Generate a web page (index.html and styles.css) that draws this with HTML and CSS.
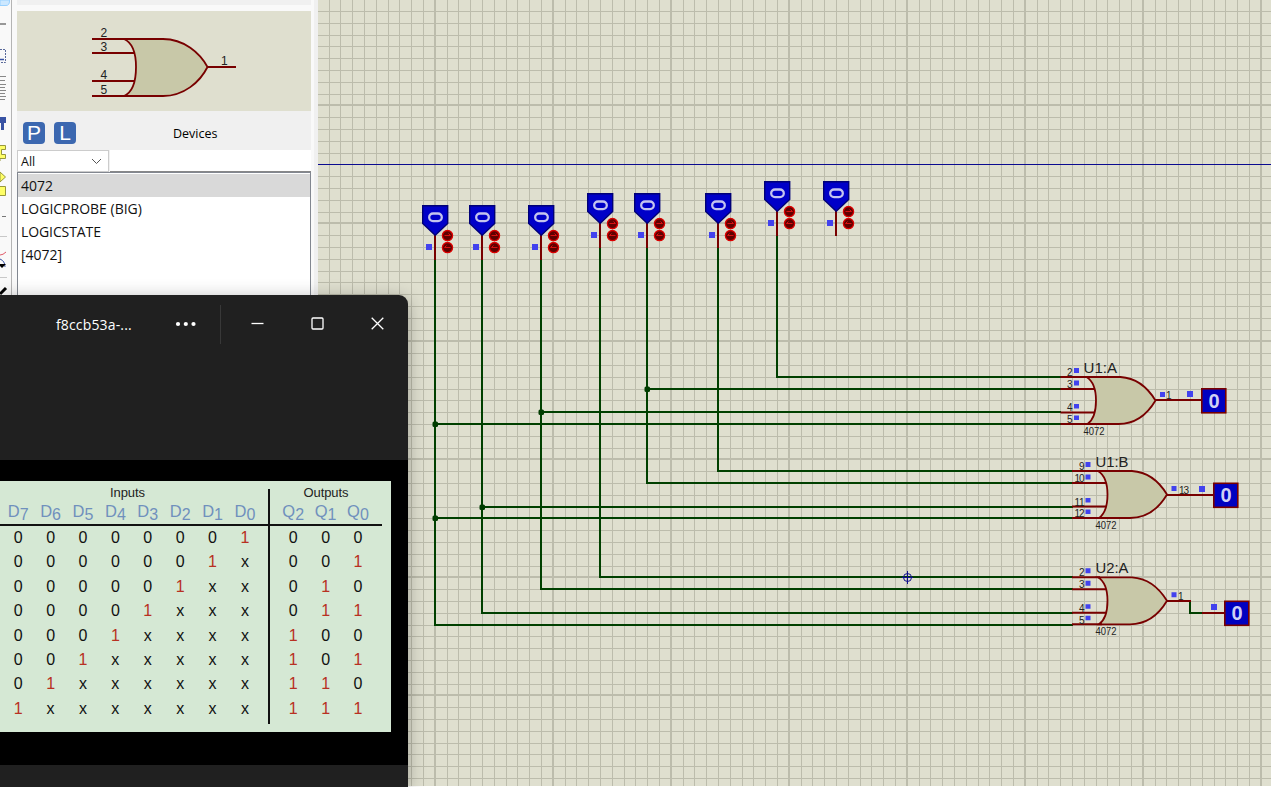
FILE: index.html
```
<!DOCTYPE html>
<html lang="en">
<head>
<meta charset="utf-8">
<title>Schematic Capture</title>
<link rel="stylesheet" href="styles.css">
</head>
<body>
<div class="app">
  <aside class="toolbar">
    <svg width="17" height="300" viewBox="0 0 17 300">
      <path d="M0 0H9.500V1Q9.500 5.500 6 5.500H0Z" fill="#cce8ff" stroke="#99d1ff"/>
      <path d="M0 24H6" stroke="#777" stroke-width="1.500"/>
      <path d="M0 49.500H5.500V62.500H0" fill="none" stroke="#5a6a9a" stroke-dasharray="2 1"/>
      <path d="M0 59.500H4" stroke="#3953a4" stroke-width="1.500"/>
      <path d="M0 76.500H6M0 80.500H5M0 84.500H6M0 87.500H5M0 90.500H6M0 93.500H5M0 96.500H6M0 99.500H5" stroke="#888"/>
      <path d="M0 117H6V123H4V130H1V123H0Z" fill="#3953a4"/>
      <path d="M-1 145.500H5.500V149.500H1.500V154.500H5.500V158.500H0V161" fill="#ffff66" stroke="#98983c"/>
      <path d="M0 172L5.500 177L0 182Z" fill="#ffff66" stroke="#98983c"/>
      <path d="M-1 186.500H5.500V195.500H-1Z" fill="#ffff66" stroke="#98983c"/>
      <path d="M2 216.500H6" stroke="#777"/>
      <path d="M0 236.500H7M0 277.500H7" stroke="#c8c8c8"/>
      <path d="M0 255Q3 255 6 252" fill="none" stroke="#e05a68"/>
      <path d="M0 259Q5 261 5 267" fill="none" stroke="#3953a4"/>
      <path d="M0 264L6 264L2 268L0 266Z" fill="#000"/>
      <path d="M0 294L6 288" stroke="#000" stroke-width="3"/>
      <path d="M11.500 0V300" stroke="#b4b4b4"/>
    </svg>
  </aside>

  <section class="panel">
    <div class="panel-top"></div>
    <div class="preview">
      <svg width="294" height="100" viewBox="17 11 294 100">
        <g class="gate">
          <path class="body" d="M124 39H163C184 39 200 53 207.500 67C200 82 184 96 163 96H124C133 92 136 79 136 67C136 55 133 43 124 39Z"/>
          <path class="pin" d="M92 39H126M92 53H134M92 81H134M92 96H126M207 67H236"/>
        </g>
        <g class="pin-text preview-text">
          <text x="100.500" y="37">2</text><text x="100.500" y="51">3</text>
          <text x="100.500" y="79">4</text><text x="100.500" y="94">5</text>
          <text x="221" y="65">1</text>
        </g>
      </svg>
    </div>
    <div class="devices-head">
      <span class="key">P</span><span class="key">L</span>
      <span class="devices-title">Devices</span>
    </div>
    <div class="filter">
      <div class="select"><span>All</span>
        <svg width="11" height="7" viewBox="0 0 11 7"><path d="M1 1L5.500 5.500L10 1" fill="none" stroke="#555"/></svg>
      </div>
      <div class="search"></div>
    </div>
    <ul class="device-list">
      <li class="selected">4072</li>
      <li>LOGICPROBE (BIG)</li>
      <li class="tight">LOGICSTATE</li>
      <li>[4072]</li>
    </ul>
  </section>

  <main class="canvas">
    <svg width="953" height="786" viewBox="318 0 953 786">
      <defs>
        <pattern id="grid" x="434" y="104" width="118" height="118" patternUnits="userSpaceOnUse">
          <path class="grid-line" d="M13.500 0V118M24.500 0V118M36.500 0V118M48.500 0V118M60.500 0V118M72.500 0V118M83.500 0V118M95.500 0V118M107.500 0V118"/>
          <path class="grid-line" d="M0 13.500H118M0 25.500H118M0 37.500H118M0 49.500H118M0 60.500H118M0 72.500H118M0 84.500H118M0 96.500H118M0 108.500H118"/>
          <path class="grid-major" d="M1 0V118M0 1H118"/>
        </pattern>
        <g id="state">
          <path class="pin" d="M0 29V55"/>
          <path d="M-12.300 .7H12.700V18.500L.2 30.300L-12.300 18.500Z" fill="#0000c8" stroke="#000078" stroke-width="1.400"/>
          <rect x="-5.800" y="8.500" width="12.600" height="7.600" rx="3.800" fill="none" stroke="#c4c4ee" stroke-width="2.300"/>
          <rect class="sq" x="-9" y="39" width="6" height="6"/>
          <g fill="#600000" stroke="#dc0000" stroke-width="1.300">
            <circle cx="12.500" cy="30.600" r="5.100"/><circle cx="12.500" cy="42.600" r="5.100"/>
          </g>
          <path d="M9.500 30.500H15.500M13.500 28.500L15.500 30.500M15.500 42.500H9.500M11.500 40.500L9.500 42.500" fill="none" stroke="#d81010"/>
        </g>
        <g id="or4" class="gate">
          <path class="body" d="M26 0H60C77 1 88 12 95 23.500C87 37 75 47 58 47H27C34 42 35.500 32 35.500 23.500C35.500 14 34 5 26 0Z"/>
          <path class="pin" d="M0 0H28M0 12H34M0 35.500H34M0 47H30"/>
          <path class="sq" d="M13.500 -9h5v5h-5zM13.500 3.500h5v5h-5zM13.500 27h5v4.500h-5zM13.500 38.500h5v4.500h-5zM99.500 15h5v5h-5z"/>
        </g>
        <g id="probe">
          <rect x=".8" y=".8" width="24" height="24" fill="#0000c0" stroke="#780000" stroke-width="1.600"/>
          <text class="probe-text" x="13" y="19.500">0</text>
        </g>
      </defs>
      <rect x="318" width="953" height="786" fill="#dfdfcf"/>
      <rect x="318" width="953" height="786" fill="url(#grid)"/>
      <path d="M318 164.500H1271" stroke="#0a0a90"/>

      <path class="wire" d="M435 259V625H1073M435 424H1061M435 518H1073M482 259V613H1073M482 507H1073M541 259V589H1073M541 412H1061M600 247V577H1073M647 247V483H1073M647 389H1061M718 247V471H1073M777 235V377H1061M1190 601V613H1203"/>
      <g fill="#003c00">
        <rect x="432.500" y="421.500" width="5.500" height="5.500" rx="1.500"/><rect x="432.500" y="515.500" width="5.500" height="5.500" rx="1.500"/>
        <rect x="479.500" y="504.500" width="5.500" height="5.500" rx="1.500"/><rect x="538.500" y="409.500" width="5.500" height="5.500" rx="1.500"/>
        <rect x="644.500" y="386.500" width="5.500" height="5.500" rx="1.500"/>
      </g>

      <use href="#state" x="435" y="205"/><use href="#state" x="482" y="205"/>
      <use href="#state" x="541" y="205"/><use href="#state" x="600" y="193"/>
      <use href="#state" x="647" y="193"/><use href="#state" x="718" y="193"/>
      <use href="#state" x="777" y="181"/><use href="#state" x="836" y="181"/>

      <use href="#or4" x="1060.500" y="377"/>
      <use href="#or4" x="1072" y="471"/>
      <use href="#or4" x="1072" y="577.300"/>
      <path class="pin" d="M1155 400H1202M1166 495H1214M1166 601H1190V602M1202 613H1225"/>
      <path class="sq" d="M1187 391h6v6h-6zM1199 486h6v6h-6zM1211 604h6v6h-6z"/>
      <use href="#probe" x="1201" y="388"/>
      <use href="#probe" x="1213" y="482.500"/>
      <use href="#probe" x="1224" y="600.500"/>

      <g class="ref-text">
        <text x="1083.500" y="373" textLength="33.500" lengthAdjust="spacingAndGlyphs">U1:A</text>
        <text x="1095.500" y="467" textLength="33" lengthAdjust="spacingAndGlyphs">U1:B</text>
        <text x="1095.500" y="573" textLength="33" lengthAdjust="spacingAndGlyphs">U2:A</text>
      </g>
      <g class="pin-text">
        <text x="1067" y="375.800">2</text><text x="1067" y="387.800">3</text><text x="1067" y="410.800">4</text><text x="1067" y="422.800">5</text><text x="1166" y="398.500">1</text>
        <text x="1079" y="469.500">9</text><text x="1074.500" y="481.500" textLength="10">10</text><text x="1074.500" y="505.500" textLength="10">11</text><text x="1074.500" y="516.800" textLength="10">12</text><text x="1179" y="493.500" textLength="10">13</text>
        <text x="1079" y="575.500">2</text><text x="1079" y="587.500">3</text><text x="1079" y="611.500">4</text><text x="1079" y="623.500">5</text><text x="1178" y="599.500">1</text>
        <text x="1083.500" y="435" textLength="21" lengthAdjust="spacingAndGlyphs">4072</text><text x="1095.500" y="529" textLength="21" lengthAdjust="spacingAndGlyphs">4072</text><text x="1095.500" y="635" textLength="21" lengthAdjust="spacingAndGlyphs">4072</text>
      </g>
      <g fill="none" stroke="#10108c"><circle cx="907.500" cy="577.500" r="4"/><path d="M902 577.500H913M907.500 571V584"/></g>
    </svg>
  </main>
</div>

<section class="viewer">
  <header class="titlebar">
    <span class="filename">f8ccb53a-...</span>
    <svg class="more" width="22" height="6" viewBox="0 0 22 6" fill="#fff"><circle cx="3" cy="3" r="2.100"/><circle cx="10.800" cy="3" r="2.100"/><circle cx="18.500" cy="3" r="2.100"/></svg>
    <span class="divider"></span>
    <div class="window-buttons">
      <svg width="13" height="13" viewBox="0 0 13 13"><path d="M0.500 6.500H12.500"/></svg>
      <svg width="13" height="13" viewBox="0 0 13 13"><rect x="1" y="1" width="11" height="11" rx="1"/></svg>
      <svg width="13" height="13" viewBox="0 0 13 13"><path d="M.7 .7L12.300 12.300M12.300 .7L.7 12.300"/></svg>
    </div>
  </header>
  <div class="image-area">
    <div class="truth">
      <div class="side inputs">
        <div class="caption">Inputs</div>
        <div class="cells names"><span>D<sub>7</sub></span><span>D<sub>6</sub></span><span>D<sub>5</sub></span><span>D<sub>4</sub></span><span>D<sub>3</sub></span><span>D<sub>2</sub></span><span>D<sub>1</sub></span><span>D<sub>0</sub></span></div>
        <div class="cells values">
          <i>0</i><i>0</i><i>0</i><i>0</i><i>0</i><i>0</i><i>0</i><b>1</b>
          <i>0</i><i>0</i><i>0</i><i>0</i><i>0</i><i>0</i><b>1</b><i>x</i>
          <i>0</i><i>0</i><i>0</i><i>0</i><i>0</i><b>1</b><i>x</i><i>x</i>
          <i>0</i><i>0</i><i>0</i><i>0</i><b>1</b><i>x</i><i>x</i><i>x</i>
          <i>0</i><i>0</i><i>0</i><b>1</b><i>x</i><i>x</i><i>x</i><i>x</i>
          <i>0</i><i>0</i><b>1</b><i>x</i><i>x</i><i>x</i><i>x</i><i>x</i>
          <i>0</i><b>1</b><i>x</i><i>x</i><i>x</i><i>x</i><i>x</i><i>x</i>
          <b>1</b><i>x</i><i>x</i><i>x</i><i>x</i><i>x</i><i>x</i><i>x</i>
        </div>
      </div>
      <div class="rule"></div>
      <div class="side outputs">
        <div class="caption">Outputs</div>
        <div class="cells names"><span>Q<sub>2</sub></span><span>Q<sub>1</sub></span><span>Q<sub>0</sub></span></div>
        <div class="cells values">
          <i>0</i><i>0</i><i>0</i>
          <i>0</i><i>0</i><b>1</b>
          <i>0</i><b>1</b><i>0</i>
          <i>0</i><b>1</b><b>1</b>
          <b>1</b><i>0</i><i>0</i>
          <b>1</b><i>0</i><b>1</b>
          <b>1</b><b>1</b><i>0</i>
          <b>1</b><b>1</b><b>1</b>
        </div>
      </div>
    </div>
  </div>
</section>
</body>
</html>
```

FILE: styles.css
```
* { box-sizing: border-box; }
body { margin: 0; overflow: hidden; font-family: "Open Sans", "Noto Sans", sans-serif; color: #111; }
svg { display: block; }
.app { display: flex; width: 1271px; height: 787px; background: #f9f9f9; }
.toolbar { width: 17px; }
.panel { width: 301px; padding-right: 3px; border-right: 4px solid #f0f0f0; }
.panel-top { width: 294px; height: 5px; margin-bottom: 6px; background: #f0f0f0; }
.preview { height: 100px; width: 294px; background: #dfdfcf; }
.canvas { flex: 1; background: #fff; }

.devices-head { display: flex; align-items: center; width: 294px; height: 39px; padding: 5px 0 0 6px; gap: 9px; background: #f0f0f0; }
.key { width: 22px; height: 22px; border-radius: 4px; background: #3c68b0; color: #fff; font: 21px/22px "Liberation Sans", sans-serif; text-align: center; }
.devices-title { width: 44px; margin-left: 88px; font-size: 12.5px; white-space: nowrap; color: #000; }
.filter { display: flex; gap: 1px; width: 294px; height: 22px; background: #f0f0f0; }
.select { display: flex; align-items: center; justify-content: space-between; width: 92px; padding: 0 6px 0 3px; border: 1px solid #ccc; background: #fff; font-size: 12.5px; }
.search { flex: 1; border-bottom: 1px solid #888; background: #fff; }
.device-list { width: 294px; height: 615px; margin: 0; padding: 1px 0; border: 1px solid #828790; background: #fff; list-style: none; font-size: 14px; line-height: 23px; }
.device-list li { height: 23px; padding-left: 3px; letter-spacing: 0; }
.device-list .tight { letter-spacing: -.1px; }
.device-list .selected { background: #d9d9d9; }

.gate .body { fill: #c8c8a8; stroke: #780000; stroke-width: 1.8; }
.pin { fill: none; stroke: #780000; stroke-width: 2; }
.wire { fill: none; stroke: #004000; stroke-width: 2; }
.grid-line { fill: none; stroke: #bcbcac; }
.grid-major { fill: none; stroke: #bcbcac; stroke-width: 2; }
.sq { fill: #4242ee; }
.pin-text { font: 10px "Liberation Sans", sans-serif; fill: #222; }
.preview-text { font-size: 12px; }
.ref-text { font: 15.5px "Liberation Sans", sans-serif; fill: #222; }
.probe-text { font: bold 20px "Liberation Sans", sans-serif; fill: #d0d0f4; text-anchor: middle; }

.viewer { position: absolute; left: 0; top: 295px; width: 408px; height: 492px; border-radius: 0 9px 0 0; background: #202020; box-shadow: 0 3px 18px rgba(0, 0, 0, .3); }
.titlebar { display: flex; align-items: center; height: 58px; padding-left: 56px; color: #fff; }
.filename { width: 119px; font-size: 14px; letter-spacing: .15px; }
.divider { width: 1px; height: 39px; margin-left: 23px; background: #383838; }
.window-buttons { display: flex; gap: 47px; margin: 0 0 2px 29.5px; }
.window-buttons svg { fill: none; stroke: #fff; stroke-width: 1.3; }
.image-area { height: 305px; margin-top: 107px; padding-top: 21px; background: #000; }
.truth { display: flex; width: 390.5px; height: 251px; background: #d5e8d4; font-family: "Liberation Sans", sans-serif; }
.side { height: 45px; padding-top: 4px; border-bottom: 2px solid #111; }
.inputs { width: 268px; padding-left: 2px; }
.outputs { width: 112px; padding-left: 7px; }
.rule { width: 2px; height: 235px; margin-top: 8px; background: #111; }
.caption { height: 15px; font-size: 13px; line-height: 16px; letter-spacing: -.1px; text-align: center; color: #222; }
.inputs .caption { padding-right: 15px; }
.outputs .caption { padding-right: 7px; }
.cells { display: grid; grid-template-columns: repeat(8, 32.4px); text-align: center; }
.outputs .cells { grid-template-columns: repeat(3, 32.4px); }
.names { height: 26px; font-size: 16.5px; line-height: 22px; color: #7090bd; }
.names sub { position: relative; top: 3px; font-size: 16px; line-height: 0; vertical-align: baseline; }
.values { grid-auto-rows: 24.4px; font-size: 16px; line-height: 24px; }
.values i, .values b { font-style: normal; font-weight: 400; }
.values b { color: #b83022; }
```
